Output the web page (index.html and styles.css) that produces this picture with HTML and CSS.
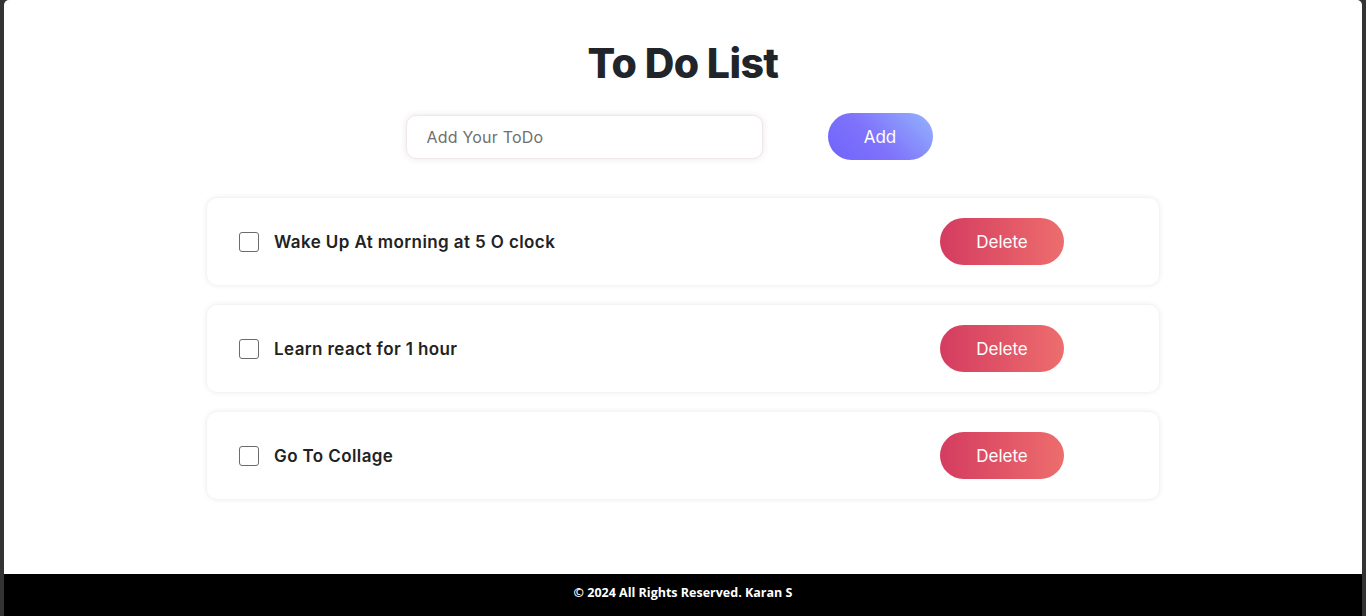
FILE: index.html
```html
<!DOCTYPE html>
<html lang="en">
<head>
<meta charset="utf-8">
<title>To Do List</title>
<link rel="stylesheet" href="styles.css">
</head>
<body>
<div class="frame">
  <main class="app">
    <h1 class="title">To Do List</h1>
    <form class="add-row">
      <input class="todo-input" type="text" placeholder="Add Your ToDo">
      <button class="btn btn-add" type="button">Add</button>
    </form>
    <ul class="list">
      <li class="card">
        <label class="item"><span class="check"></span><span class="item-text">Wake Up At morning at 5 O clock</span></label>
        <button class="btn btn-delete" type="button">Delete</button>
      </li>
      <li class="card">
        <label class="item"><span class="check"></span><span class="item-text">Learn react for 1 hour</span></label>
        <button class="btn btn-delete" type="button">Delete</button>
      </li>
      <li class="card">
        <label class="item"><span class="check"></span><span class="item-text">Go To Collage</span></label>
        <button class="btn btn-delete" type="button">Delete</button>
      </li>
    </ul>
  </main>
  <footer class="footer">&copy; 2024 All Rights Reserved. Karan S</footer>
</div>
</body>
</html>
```
FILE: styles.css
```css
* { box-sizing: border-box; }
html, body { margin: 0; padding: 0; height: 100%; }
body {
  background: #333333;
  font-family: "Open Sans", "Liberation Sans", sans-serif;
  overflow: hidden;
}
.frame {
  margin: 0 4px;
  height: 616px;
  background: #ffffff;
  border-top-left-radius: 5px;
  border-top-right-radius: 5px;
  display: flex;
  flex-direction: column;
  overflow: hidden;
}
.app {
  flex: 1;
  display: flex;
  flex-direction: column;
  align-items: center;
  padding-top: 38px;
}
.title {
  margin: 0;
  font-family: "Inter", "Open Sans", sans-serif;
  font-weight: 800;
  font-size: 41px;
  letter-spacing: -0.6px;
  line-height: 50px;
  color: #212529;
}
.add-row {
  margin: 25px 0 0;
  padding-right: 28px;
  display: flex;
  align-items: center;
  gap: 65px;
}
.todo-input {
  width: 357px;
  height: 44px;
  border: 1px solid #f0e8e8;
  border-radius: 10px;
  box-shadow: 0 0 6px rgba(150, 110, 110, 0.18);
  padding: 0 20px;
  font-family: "Inter", "Open Sans", sans-serif;
  font-size: 16px;
  letter-spacing: 0.2px;
  color: #333;
  outline: none;
}
.todo-input::placeholder { color: #6f6f6f; }
.btn {
  border: none;
  border-radius: 24px;
  height: 47px;
  color: #fff;
  font-family: "Inter", "Open Sans", sans-serif;
  font-size: 17px;
  cursor: pointer;
}
.btn-add {
  width: 105px;
  background: linear-gradient(45deg, #6e64fb 0%, #7f73fb 45%, #94b4fd 100%);
}
.list {
  list-style: none;
  margin: 38px 0 0;
  padding: 0;
  display: flex;
  flex-direction: column;
  gap: 20px;
}
.card {
  width: 952px;
  height: 87px;
  border-radius: 10px;
  background: #fff;
  box-shadow: 0 0 5px rgba(150, 110, 110, 0.2);
  display: flex;
  align-items: center;
  justify-content: space-between;
  padding: 0 95px 0 32px;
}
.item {
  display: flex;
  align-items: center;
  gap: 15px;
}
.check {
  width: 20px;
  height: 20px;
  border: 1.5px solid #6b6b6b;
  border-radius: 3px;
  background: #fff;
}
.item-text {
  font-family: "Inter", "Open Sans", sans-serif;
  font-weight: 600;
  font-size: 17px;
  letter-spacing: 0.4px;
  color: #222;
}
.btn-delete {
  width: 124px;
  background: linear-gradient(90deg, #d43c60 0%, #ed6d6d 100%);
}
.footer {
  height: 42px;
  padding-bottom: 6px;
  background: #000;
  color: #fff;
  display: flex;
  align-items: center;
  justify-content: center;
  font-family: "Open Sans", sans-serif;
  font-weight: 700;
  font-size: 12.5px;
}
```
